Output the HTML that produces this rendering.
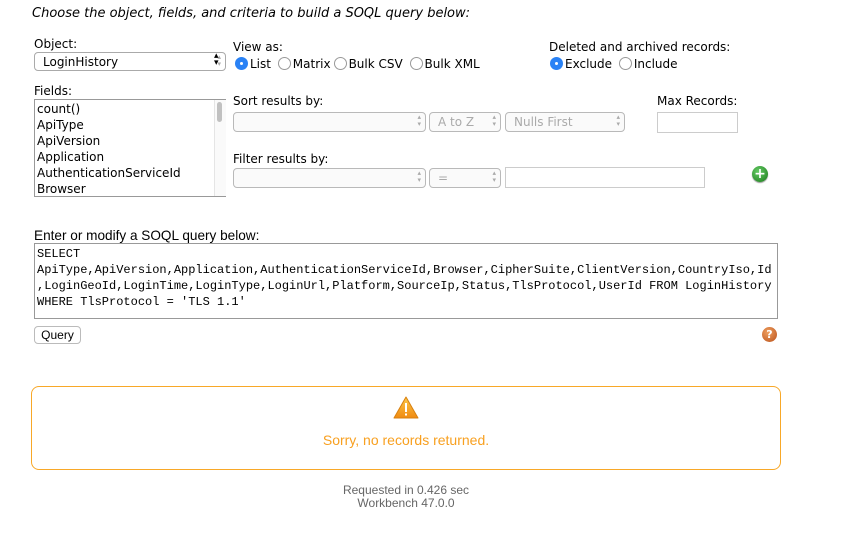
<!DOCTYPE html>
<html><head><style>
body{margin:0;width:843px;height:542px;background:#fff;font-family:"DejaVu Sans","Liberation Sans",sans-serif;font-size:12px;color:#000;position:relative;overflow:hidden}
.a{position:absolute;white-space:nowrap}
.sel{position:absolute;border:1px solid #b9b9b9;border-radius:4px;background:#fafafa;box-sizing:border-box;color:#aaa;font-size:12px;padding:0 8px;line-height:18px}
.sel:after{content:"▴\A▾";white-space:pre;position:absolute;right:4px;top:1px;font-size:7px;line-height:7px;color:#aaa}
.rad{display:inline-block;width:13px;height:13px;border:1px solid #999;border-radius:50%;vertical-align:-2px;box-sizing:border-box;background:#fff;margin:0 2px 0 3px}
.on{background:#2a82f5;border-color:#2a82f5;position:relative}
.on:after{content:"";position:absolute;left:4px;top:4px;width:3px;height:3px;background:#fff;border-radius:50%}
.box{position:absolute;border:1px solid #ccc;box-sizing:border-box;background:#fff}
</style></head><body>
<div class="a" style="left:32px;top:6px;font-style:italic;font-size:13px">Choose the object, fields, and criteria to build a SOQL query below:</div>

<div class="a" style="left:34px;top:37px">Object:</div>
<div class="sel" style="left:34px;top:52px;width:192px;height:19px;color:#000;border-color:#aaa;background:#fff;padding-left:8px">LoginHistory</div>
<div class="a" style="left:214px;top:53px;font-size:9px;line-height:7px">▴<br>▾</div>

<div class="a" style="left:233px;top:40px">View as:</div>
<div class="a" style="left:232px;top:57px"><span class="rad on"></span>List <span class="rad"></span>Matrix<span class="rad"></span>Bulk CSV <span class="rad"></span>Bulk XML</div>

<div class="a" style="left:549px;top:40px">Deleted and archived records:</div>
<div class="a" style="left:547px;top:57px"><span class="rad on"></span>Exclude <span class="rad"></span>Include</div>

<div class="a" style="left:34px;top:84px">Fields:</div>
<div class="box" style="left:34px;top:99px;width:192px;height:98px;border-color:#999;line-height:16px;padding:1px 2px;overflow:hidden">count()<br>ApiType<br>ApiVersion<br>Application<br>AuthenticationServiceId<br>Browser</div>
<div class="a" style="left:214px;top:100px;width:11px;height:96px;border-left:1px solid #e5e5e5;background:#fafafa"></div>
<div class="a" style="left:217px;top:102px;width:5px;height:20px;background:#c1c1c1;border-radius:3px"></div>

<div class="a" style="left:233px;top:94px">Sort results by:</div>
<div class="sel" style="left:233px;top:112px;width:193px;height:20px"></div>
<div class="sel" style="left:429px;top:112px;width:72px;height:20px">A to Z</div>
<div class="sel" style="left:505px;top:112px;width:120px;height:20px">Nulls First</div>
<div class="a" style="left:657px;top:94px">Max Records:</div>
<div class="box" style="left:657px;top:112px;width:81px;height:21px"></div>

<div class="a" style="left:233px;top:152px">Filter results by:</div>
<div class="sel" style="left:233px;top:168px;width:193px;height:20px"></div>
<div class="sel" style="left:429px;top:168px;width:72px;height:20px">=</div>
<div class="box" style="left:505px;top:167px;width:200px;height:21px"></div>
<div class="a" style="left:752px;top:166px;width:16px;height:16px;border-radius:50%;background:radial-gradient(circle at 40% 35%,#6c6,#1a7a1a);color:#fff;font-weight:bold;font-size:14px;line-height:16px;text-align:center;box-shadow:0 1px 1px #999">+</div>

<div class="a" style="left:34px;top:228px;font-family:'Liberation Sans',sans-serif;font-size:13.6px">Enter or modify a SOQL query below:</div>
<div class="box" style="left:34px;top:243px;width:744px;height:76px;border-color:#999;font-family:'Liberation Mono',monospace;font-size:12px;line-height:16px;padding:2px 2px;white-space:pre;overflow:hidden">SELECT
ApiType,ApiVersion,Application,AuthenticationServiceId,Browser,CipherSuite,ClientVersion,CountryIso,Id
,LoginGeoId,LoginTime,LoginType,LoginUrl,Platform,SourceIp,Status,TlsProtocol,UserId FROM LoginHistory
WHERE TlsProtocol = 'TLS 1.1'</div>
<div class="a" style="left:34px;top:326px;width:47px;height:18px;border:1px solid #bbb;border-radius:4px;box-sizing:border-box;background:#fff;font-family:'Liberation Sans',sans-serif;font-size:12px;line-height:16px;text-align:center">Query</div>
<div class="a" style="left:762px;top:327px;width:15px;height:15px;border-radius:50%;background:radial-gradient(circle at 40% 35%,#f0a060,#b8501a);color:#fff;font-weight:bold;font-size:11px;line-height:15px;text-align:center">?</div>

<div class="a" style="left:31px;top:386px;width:750px;height:84px;border:1px solid #f8a828;border-radius:8px;box-sizing:border-box"></div>
<svg class="a" style="left:393px;top:396px" width="26" height="24" viewBox="0 0 26 24"><defs><linearGradient id="g" x1="0" y1="0" x2="0" y2="1"><stop offset="0" stop-color="#fcc84a"/><stop offset="1" stop-color="#f08a10"/></linearGradient></defs><path d="M13 1 L25 22 L1 22 Z" fill="url(#g)" stroke="#d88010" stroke-linejoin="round"/><rect x="12" y="7" width="2" height="9" fill="#fff"/><rect x="12" y="17.5" width="2" height="2" fill="#fff"/></svg>
<div class="a" style="left:0;width:812px;top:432px;text-align:center;color:#f8a020;font-family:'Liberation Sans',sans-serif;font-size:14px">Sorry, no records returned.</div>
<div class="a" style="left:0;width:812px;top:484px;text-align:center;color:#666;font-family:'Liberation Sans',sans-serif;font-size:12px;line-height:13px">Requested in 0.426 sec<br>Workbench 47.0.0</div>
</body></html>
